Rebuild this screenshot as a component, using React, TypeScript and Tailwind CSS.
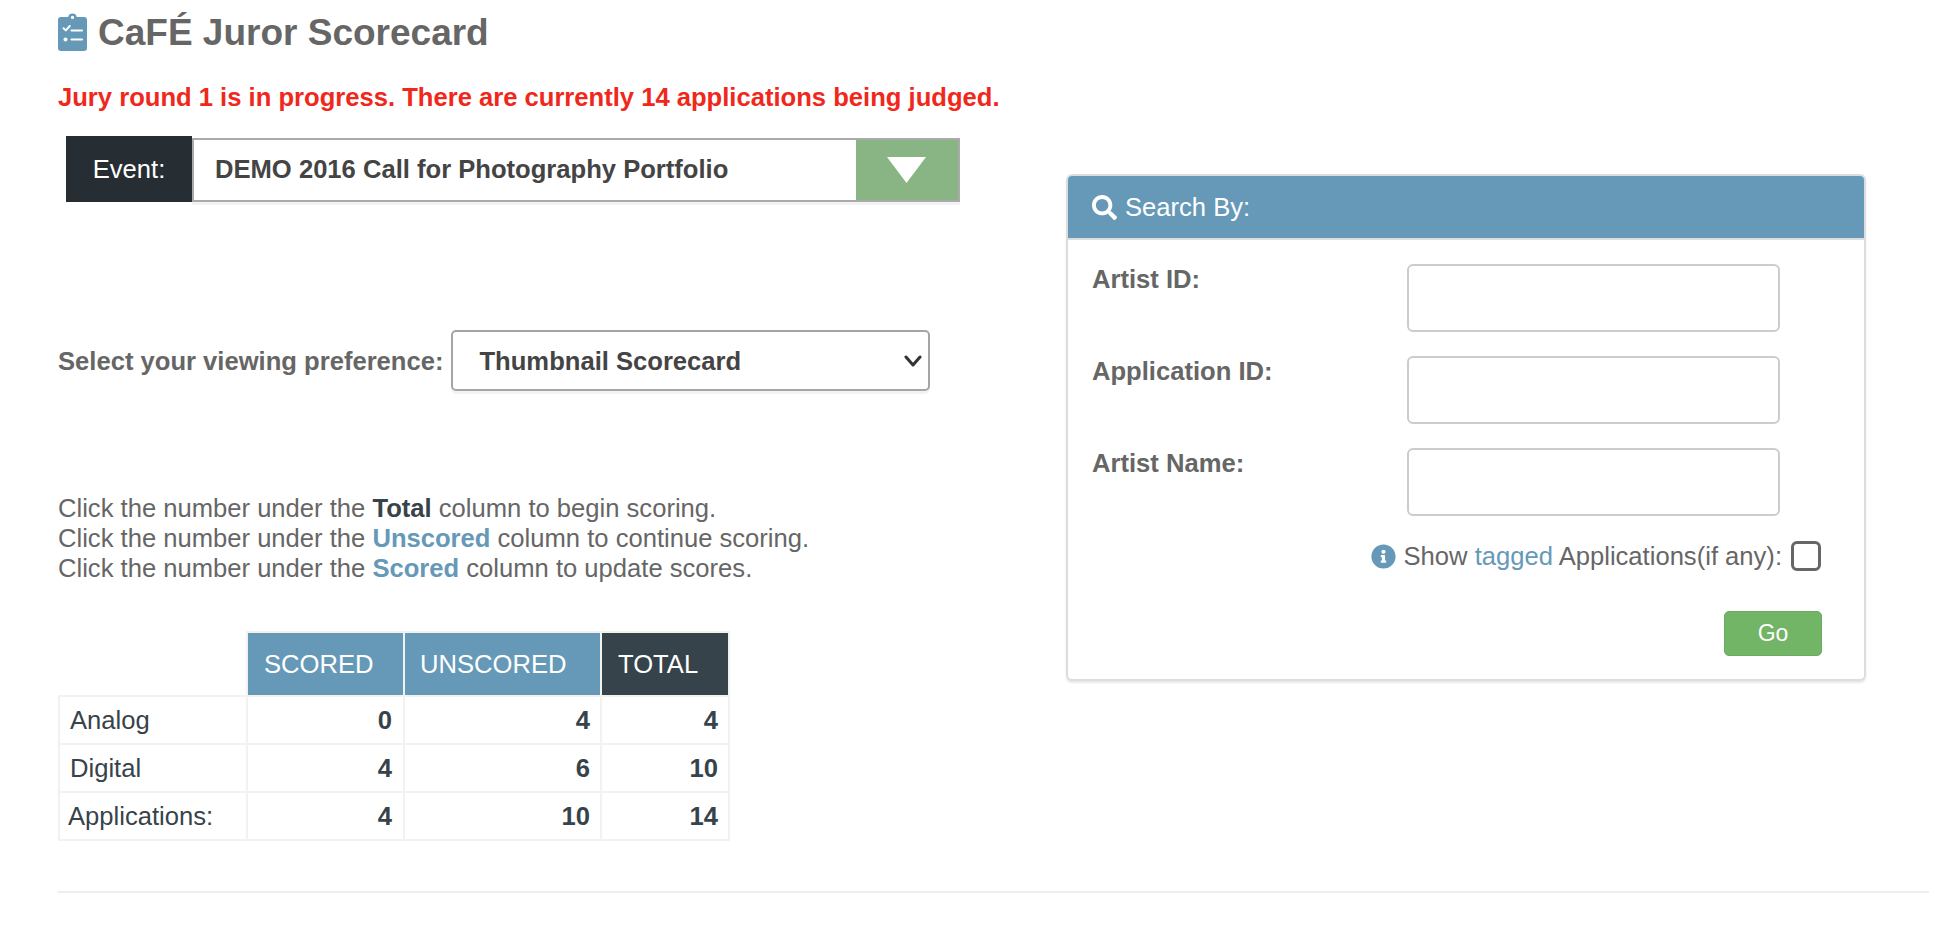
import { FaInfoCircle, FaSearch } from "react-icons/fa";

const ROWS = [
  { label: "Analog", scored: 0, unscored: 4, total: 4, pad: "pl-[10px]" },
  { label: "Digital", scored: 4, unscored: 6, total: 10, pad: "pl-[10px]" },
  { label: "Applications:", scored: 4, unscored: 10, total: 14, pad: "pl-2" },
];

const FIELDS = ["Artist ID:", "Application ID:", "Artist Name:"];

function ClipboardIcon() {
  return (
    <svg viewBox="0 0 29 38" className="w-[29px] h-[38px] shrink-0" aria-hidden="true">
      <path
        fill="#6699b8"
        d="M3 4h7.2a4.4 4.4 0 0 1 8.6 0H26a3 3 0 0 1 3 3v28a3 3 0 0 1-3 3H3a3 3 0 0 1-3-3V7a3 3 0 0 1 3-3z"
      />
      <circle cx="14.5" cy="4.4" r="1.6" fill="#fff" />
      <path d="M5.5 15.2l2.3 2.2 4-4.4" fill="none" stroke="#fff" strokeWidth="1.9" strokeLinecap="round" strokeLinejoin="round" />
      <path d="M13.5 17.5h10.5M13.5 26.5h10.5" stroke="#fff" strokeWidth="2.1" strokeLinecap="round" />
      <circle cx="7.5" cy="26.5" r="2" fill="#fff" />
    </svg>
  );
}

export default function App() {
  return (
    <div className="min-h-[927px] bg-white pl-[58px] pr-[29px] font-['Liberation_Sans',Arial,sans-serif] text-[25.6px] text-[#666]">
      <div className="flex items-center gap-[11px] pt-[13px] h-[51px]">
        <ClipboardIcon />
        <h1 className="text-[37px] leading-[38px] pt-px font-bold text-[#666]">CaFÉ Juror Scorecard</h1>
      </div>
      <p className="mt-[32px] leading-[28px] font-bold text-[#f0281c]">
        Jury round 1 is in progress. There are currently 14 applications being judged.
      </p>

      <div className="flex">
        <div className="w-[1008px] shrink-0">
          <div className="mt-[25px] ml-2 flex items-start h-[66px]">
            <div className="w-[126px] h-[66px] bg-[#262d33] text-white flex items-center justify-center">Event:</div>
            <div className="mt-[2px] w-[768px] h-[64px] border-2 border-[#aaa] bg-white flex items-stretch shadow-[0_3px_0_#f3f3f3]">
              <div className="flex-1 flex items-center pl-[21px] pb-[2px] font-bold text-[#444]">
                DEMO 2016 Call for Photography Portfolio
              </div>
              <div className="w-[102px] bg-[#88b583] flex items-center justify-center pr-[2px]">
                <svg viewBox="0 0 39 26" className="w-[39px] h-[26px]" aria-hidden="true">
                  <path d="M0 0h39L19.5 26z" fill="#fff" />
                </svg>
              </div>
            </div>
          </div>

          <div className="mt-[128px] flex items-center gap-[8px]">
            <label className="font-bold pt-[2px]">Select your viewing preference:</label>
            <div className="relative w-[479px] h-[61px]">
              <select
                defaultValue="Thumbnail Scorecard"
                className="w-full h-full appearance-none bg-white border-2 border-[#a5a5a5] rounded-[5px] pl-[26px] pt-[2px] font-bold text-[#444] shadow-[0_3px_0_#f3f3f3]"
              >
                <option>Thumbnail Scorecard</option>
              </select>
              <svg viewBox="0 0 18 12" className="absolute right-[8px] top-[25px] w-[18px] h-[12px]" aria-hidden="true">
                <path d="M2 2l7 8 7-8" fill="none" stroke="#333" strokeWidth="3" strokeLinecap="round" strokeLinejoin="round" />
              </svg>
            </div>
          </div>

          <div className="mt-[102px] leading-[30px]">
            <div>
              Click the number under the <b className="text-[#37434a]">Total</b> column to begin scoring.
            </div>
            <div>
              Click the number under the <b className="text-[#6699b8]">Unscored</b> column to continue scoring.
            </div>
            <div>
              Click the number under the <b className="text-[#6699b8]">Scored</b> column to update scores.
            </div>
          </div>

          <table className="mt-[48px] table-fixed border-collapse w-[670px] text-[#37434a]">
            <colgroup>
              <col className="w-[188px]" />
              <col className="w-[157px]" />
              <col className="w-[197px]" />
              <col className="w-[128px]" />
            </colgroup>
            <thead>
              <tr className="h-[64px] text-white text-left">
                <th className="border-0"></th>
                <th className="font-normal pl-[16px] bg-[#6699b8] border-2 border-[#f2f2ee]">SCORED</th>
                <th className="font-normal pl-[15px] bg-[#6699b8] border-2 border-[#f2f2ee]">UNSCORED</th>
                <th className="font-normal pl-[16px] bg-[#37434a] border-2 border-[#f2f2ee]">TOTAL</th>
              </tr>
            </thead>
            <tbody>
              {ROWS.map((row) => (
                <tr key={row.label} className="h-[48px]">
                  <td className={`border-2 border-[#f2f2ee] ${row.pad}`}>{row.label}</td>
                  <td className="border-2 border-[#f2f2ee] text-right pr-[11px] font-bold">{row.scored}</td>
                  <td className="border-2 border-[#f2f2ee] text-right pr-[10px] font-bold">{row.unscored}</td>
                  <td className="border-2 border-[#f2f2ee] text-right pr-[10px] font-bold">{row.total}</td>
                </tr>
              ))}
            </tbody>
          </table>
        </div>

        <div className="mt-[63px] w-[800px] h-[507px] border-2 border-[#ddd] rounded-[6px] bg-white shadow-[0_2px_2px_#e8e8e8] overflow-hidden">
          <div className="h-[64px] bg-[#6699b8] border-b-2 border-[#ddd] text-white flex items-center gap-[8px] pl-[24px]">
            <FaSearch className="w-[25px] h-[25px]" />
            <span>Search By:</span>
          </div>
          <div className="pl-[24px] pr-[42px]">
            {FIELDS.map((field) => (
              <div key={field} className="flex items-start mt-[24px]">
                <label className="w-[315px] font-bold leading-[30px]">{field}</label>
                <input
                  type="text"
                  className="w-[373px] h-[68px] border-2 border-[#ccc] rounded-[6px] bg-white"
                />
              </div>
            ))}
            <div className="mt-[25px] pr-px flex items-center justify-end h-[30px]">
              <FaInfoCircle className="w-[25px] h-[25px] text-[#6699b8]" />
              <span className="ml-[8px]">
                Show <a className="text-[#6699b8]">tagged</a> Applications(if any):
              </span>
              <input
                type="checkbox"
                className="ml-[9px] w-[30px] h-[30px] appearance-none border-[3px] border-[#666] rounded-[6px] bg-white"
              />
            </div>
            <div className="mt-[40px] flex justify-end">
              <button className="w-[98px] h-[45px] bg-[#72b566] border border-[#6aab5f] rounded-[5px] text-white text-[23px]">
                Go
              </button>
            </div>
          </div>
        </div>
      </div>

      <hr className="mt-[50px] border-0 border-t-2 border-[#eee]" />
    </div>
  );
}
